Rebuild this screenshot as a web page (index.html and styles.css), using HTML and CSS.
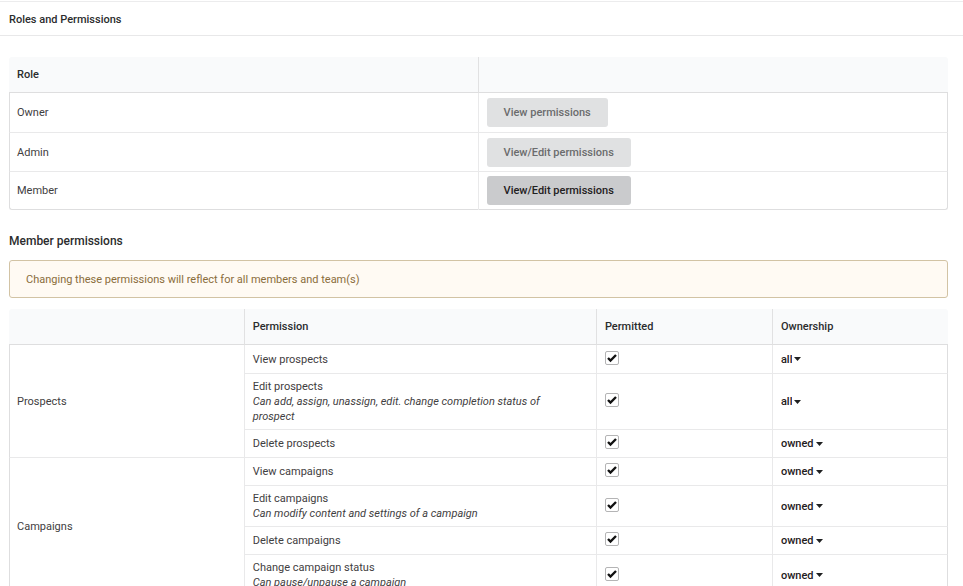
FILE: index.html
```html
<!DOCTYPE html>
<html lang="en">
<head>
<meta charset="utf-8">
<title>Roles and Permissions</title>
<link rel="stylesheet" href="styles.css">
</head>
<body>
<header class="page-header"><h1>Roles and Permissions</h1></header>
<main class="content">
  <table class="table roles">
    <colgroup><col class="col-role"><col></colgroup>
    <thead><tr><th scope="col">Role</th><th></th></tr></thead>
    <tbody>
      <tr><td>Owner</td><td><button class="button" type="button">View permissions</button></td></tr>
      <tr><td>Admin</td><td><button class="button" type="button">View/Edit permissions</button></td></tr>
      <tr><td>Member</td><td><button class="button active" type="button">View/Edit permissions</button></td></tr>
    </tbody>
  </table>
  <h2>Member permissions</h2>
  <p class="message">Changing these permissions will reflect for all members and team(s)</p>
  <table class="table permissions">
    <colgroup><col class="col-group"><col class="col-name"><col class="col-permitted"><col class="col-ownership"></colgroup>
    <thead><tr><th></th><th scope="col">Permission</th><th scope="col">Permitted</th><th scope="col">Ownership</th></tr></thead>
    <tbody>
      <tr>
        <td class="group" rowspan="3">Prospects</td>
        <td class="name">View prospects</td>
        <td><span class="check"><input type="checkbox" aria-label="View prospects permitted" checked></span></td>
        <td><span class="dropdown"><select aria-label="View prospects ownership"><option selected>all</option><option>owned</option></select><svg class="caret" viewBox="0 0 7 4"><path d="M0 0h7L3.5 4z"/></svg></span></td>
      </tr>
      <tr>
        <td class="name">Edit prospects<br><em>Can add, assign, unassign, edit. change completion status of prospect</em></td>
        <td><span class="check"><input type="checkbox" aria-label="Edit prospects permitted" checked></span></td>
        <td><span class="dropdown"><select aria-label="Edit prospects ownership"><option selected>all</option><option>owned</option></select><svg class="caret" viewBox="0 0 7 4"><path d="M0 0h7L3.5 4z"/></svg></span></td>
      </tr>
      <tr>
        <td class="name">Delete prospects</td>
        <td><span class="check"><input type="checkbox" aria-label="Delete prospects permitted" checked></span></td>
        <td><span class="dropdown"><select aria-label="Delete prospects ownership"><option>all</option><option selected>owned</option></select><svg class="caret" viewBox="0 0 7 4"><path d="M0 0h7L3.5 4z"/></svg></span></td>
      </tr>
      <tr>
        <td class="group" rowspan="4">Campaigns</td>
        <td class="name">View campaigns</td>
        <td><span class="check"><input type="checkbox" aria-label="View campaigns permitted" checked></span></td>
        <td><span class="dropdown"><select aria-label="View campaigns ownership"><option>all</option><option selected>owned</option></select><svg class="caret" viewBox="0 0 7 4"><path d="M0 0h7L3.5 4z"/></svg></span></td>
      </tr>
      <tr>
        <td class="name">Edit campaigns<br><em>Can modify content and settings of a campaign</em></td>
        <td><span class="check"><input type="checkbox" aria-label="Edit campaigns permitted" checked></span></td>
        <td><span class="dropdown"><select aria-label="Edit campaigns ownership"><option>all</option><option selected>owned</option></select><svg class="caret" viewBox="0 0 7 4"><path d="M0 0h7L3.5 4z"/></svg></span></td>
      </tr>
      <tr>
        <td class="name">Delete campaigns</td>
        <td><span class="check"><input type="checkbox" aria-label="Delete campaigns permitted" checked></span></td>
        <td><span class="dropdown"><select aria-label="Delete campaigns ownership"><option>all</option><option selected>owned</option></select><svg class="caret" viewBox="0 0 7 4"><path d="M0 0h7L3.5 4z"/></svg></span></td>
      </tr>
      <tr>
        <td class="name">Change campaign status<br><em>Can pause/unpause a campaign</em></td>
        <td><span class="check"><input type="checkbox" aria-label="Change campaign status permitted" checked></span></td>
        <td><span class="dropdown"><select aria-label="Change campaign status ownership"><option>all</option><option selected>owned</option></select><svg class="caret" viewBox="0 0 7 4"><path d="M0 0h7L3.5 4z"/></svg></span></td>
      </tr>
    </tbody>
  </table>
</main>
</body>
</html>
```
FILE: styles.css
```css
* { box-sizing: border-box; }
html { scrollbar-width: none; }
body {
  margin: 0;
  padding-top: 1px;
  background: #fff;
  color: #3f4041;
  font: 11px/15px Roboto, "Liberation Sans", sans-serif;
}
.page-header {
  padding: 10px 9px 8px;
  border-top: 1px solid #ececed;
  border-bottom: 1px solid #e8e8e9;
}
h1, h2, th { color: #2b2c2d; font-weight: 500; }
h1, h2 { margin: 0; }
h1 { font-size: 11px; line-height: 15px; }
h2 { margin: 23px 0 10px; font-size: 12px; line-height: 17px; }
.content { padding: 21px 15px 0 9px; }
.table {
  width: 100%;
  border-collapse: separate;
  border-spacing: 0;
  table-layout: fixed;
}
th, td { text-align: left; vertical-align: middle; }
th {
  height: 36px;
  padding: 0 8px;
  background: #f9fafb;
  border-bottom: 1px solid #dededf;
}
th + th { border-left: 1px solid #e1e1e2; }
th:first-child { border-top-left-radius: 3px; }
th:last-child { border-top-right-radius: 3px; }
td {
  padding: 5px 8px;
  border-top: 1px solid #e9e9ea;
  border-left: 1px solid #e9e9ea;
}
tbody tr:first-child td { border-top: 0; }
td:last-child { border-right: 1px solid #dededf; }
.roles td:first-child, .group { padding-left: 7px; border-left-color: #dededf; }
.roles td { height: 39px; padding-block: 4px; }
.roles tr:last-child td { border-bottom: 1px solid #dededf; }
.roles tr:last-child td:first-child { border-bottom-left-radius: 3px; }
.roles tr:last-child td:last-child { border-bottom-right-radius: 3px; }
.permissions td { height: 28px; }
.name { padding-right: 24px; }
.col-role { width: 49.9%; }
.col-group { width: 25%; }
.col-name { width: 37.5%; }
.col-permitted, .col-ownership { width: 18.75%; }
em { font-style: italic; }
.button {
  display: block;
  height: 29px;
  padding: 0 17px;
  border: 0;
  border-radius: 3px;
  background: #e0e1e2;
  color: #6b6c6d;
  font: inherit;
  font-weight: 500;
}
.button.active { background: #cacbcd; color: #1f2021; }
.message {
  margin: 0 0 11px;
  padding: 11px 16px 10px;
  border: 1px solid #d2c3a4;
  border-radius: 3px;
  background: #fffaf3;
  color: #8a6d3b;
  line-height: 15px;
}
.check { display: flex; height: 17px; }
.check input {
  appearance: none;
  width: 14px;
  height: 14px;
  margin: 0;
  border: 1px solid #b4b4b5;
  border-radius: 2px;
  background: #fff;
}
.check input:checked {
  background: #fff url("data:image/svg+xml,%3Csvg xmlns='http://www.w3.org/2000/svg' viewBox='0 0 12 12'%3E%3Cpath d='M2 6l2.5 2.5L10 3' fill='none' stroke='%23111' stroke-width='2.4'/%3E%3C/svg%3E") center / 12px 12px no-repeat;
}
.dropdown { display: flex; align-items: center; gap: 2px; }
.dropdown select {
  appearance: none;
  field-sizing: content;
  height: 15px;
  margin: 0;
  padding: 0;
  border: 0;
  background: none;
  color: #1f2021;
  font: inherit;
  font-weight: 500;
}
.caret { width: 7px; height: 4px; fill: #1f2021; }
```
